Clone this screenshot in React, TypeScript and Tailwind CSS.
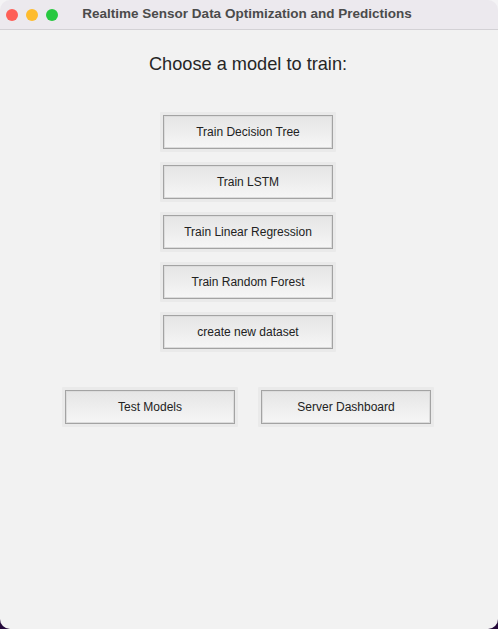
import React from 'react';

const trainButtons: string[] = [
  'Train Decision Tree',
  'Train LSTM',
  'Train Linear Regression',
  'Train Random Forest',
  'create new dataset',
];

// macOS-ish push button with a soft halo around it
const PushButton: React.FC<{ label: string }> = ({ label }) => (
  <div className="p-[3px] bg-[#eaeaea] rounded-[1px]">
    <button className="w-[170px] h-[34px] border border-[#a3a3a3] bg-gradient-to-b from-[#e5e5e5] to-[#f6f6f6] text-[12px] text-[#222] shadow-[inset_0_0_0_1px_#dcdcdc]">
      {label}
    </button>
  </div>
);

export default function App() {
  return (
    <div
      className="w-[498px] h-[629px] bg-[linear-gradient(#f4f3f5_50%,#24093a_50%)]"
      style={{ fontFamily: '"Liberation Sans", Arial, sans-serif' }}
    >
      <div className="w-full h-full rounded-[10px] overflow-hidden bg-[#f2f2f2] flex flex-col">
        {/* title bar */}
        <div className="relative h-[30px] shrink-0 bg-[#ece9ee] border-b border-[#d3d1d5] flex items-center justify-center">
          <div className="absolute left-[6px] top-[9px] flex gap-[8px]">
            <span className="w-[12px] h-[12px] rounded-full bg-[#fe5f57]" />
            <span className="w-[12px] h-[12px] rounded-full bg-[#febc2e]" />
            <span className="w-[12px] h-[12px] rounded-full bg-[#28c840]" />
          </div>
          <span className="text-[13.5px] font-bold text-[#4b4b4b] pr-[4px]">
            Realtime Sensor Data Optimization and Predictions
          </span>
        </div>

        <div className="flex flex-col items-center pt-[23px]">
          <h1 className="text-[18.2px] text-[#262626] leading-[22px] pr-[2px]">Choose a model to train:</h1>

          <div className="flex flex-col gap-[10px] mt-[37px] pr-[2px]">
            {trainButtons.map((b) => (
              <PushButton key={b} label={b} />
            ))}
          </div>

          <div className="flex gap-[20px] mt-[35px] pr-[2px]">
            <PushButton label="Test Models" />
            <PushButton label="Server Dashboard" />
          </div>
        </div>
      </div>
    </div>
  );
}
